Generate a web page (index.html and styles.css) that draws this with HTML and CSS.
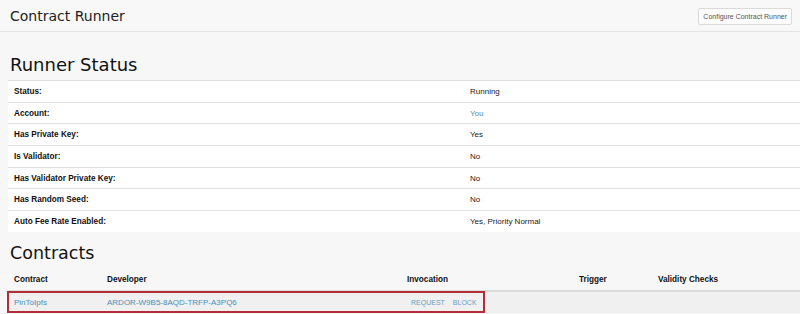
FILE: index.html
```html
<!DOCTYPE html>
<html lang="en">
<head>
    <meta charset="UTF-8">
    <meta name="viewport" content="width=device-width, initial-scale=1.0">
    <title>Contract Runner</title>
    <link rel="stylesheet" href="styles.css">
</head>
<body>
    <div class="page-header">
        <h1>Contract Runner</h1>
        <button class="btn">Configure Contract Runner</button>
    </div>

    <div class="content">
        <h2>Runner Status</h2>
        <table class="status-table">
            <tr><td class="label">Status:</td><td>Running</td></tr>
            <tr><td class="label">Account:</td><td><a href="#">You</a></td></tr>
            <tr><td class="label">Has Private Key:</td><td>Yes</td></tr>
            <tr><td class="label">Is Validator:</td><td>No</td></tr>
            <tr><td class="label">Has Validator Private Key:</td><td>No</td></tr>
            <tr><td class="label">Has Random Seed:</td><td>No</td></tr>
            <tr><td class="label">Auto Fee Rate Enabled:</td><td>Yes, Priority Normal</td></tr>
        </table>

        <h2 class="contracts-title">Contracts</h2>
        <div class="contracts-wrap">
            <table class="contracts-table">
                <thead>
                    <tr>
                        <th class="col-contract">Contract</th>
                        <th class="col-developer">Developer</th>
                        <th class="col-invocation">Invocation</th>
                        <th class="col-trigger">Trigger</th>
                        <th>Validity Checks</th>
                    </tr>
                </thead>
                <tbody>
                    <tr>
                        <td><a href="#">PinToIpfs</a></td>
                        <td><a href="#">ARDOR-W9B5-8AQD-TRFP-A3PQ6</a></td>
                        <td><a href="#" class="action">REQUEST</a><a href="#" class="action">BLOCK</a></td>
                        <td></td>
                        <td></td>
                    </tr>
                </tbody>
            </table>
            <div class="highlight"></div>
        </div>
    </div>
</body>
</html>
```

FILE: styles.css
```css
body {
    margin: 0;
    padding: 0;
    background: #f7f7f7;
    font-family: "Liberation Sans", Arial, sans-serif;
    color: #222;
}
a {
    color: #4a8db8;
    text-decoration: none;
}
.page-header {
    height: 31px;
    display: flex;
    align-items: center;
    justify-content: space-between;
    padding: 0 8px 0 10px;
    border-bottom: 1px solid #e4e4e4;
    background: #f8f8f8;
}
.page-header h1 {
    margin: 0;
    font-family: "DejaVu Sans", sans-serif;
    font-size: 14px;
    font-weight: normal;
    color: #222;
}
.btn {
    height: 17px;
    padding: 0 4px;
    margin-top: 1px;
    font-family: "Liberation Sans", Arial, sans-serif;
    font-size: 7px;
    color: #555;
    background: #fcfcfc;
    border: 1px solid #dadada;
    border-radius: 2px;
}
.content {
    padding-left: 8px;
}
.content h2 {
    margin: 22px 0 5px 2px;
    font-family: "DejaVu Sans", sans-serif;
    font-size: 18px;
    font-weight: normal;
    color: #111;
}
.status-table {
    width: 100%;
    border-collapse: collapse;
    background: #fff;
    font-size: 8px;
}
.status-table td {
    height: 21.7px;
    box-sizing: border-box;
    padding: 0 6px;
    border-top: 1px solid #e2e2e2;
    vertical-align: middle;
}
.status-table td.label {
    width: 456px;
    box-sizing: border-box;
    font-size: 8.2px;
    font-weight: bold;
    color: #111;
}
.content h2.contracts-title {
    margin: 11px 0 6px 2px;
    font-size: 17.5px;
}
.contracts-wrap {
    position: relative;
}
.contracts-table {
    width: 100%;
    border-collapse: collapse;
    font-size: 8px;
}
.contracts-table th {
    height: 22px;
    box-sizing: border-box;
    padding: 0 6px;
    text-align: left;
    font-size: 8.2px;
    font-weight: bold;
    color: #111;
    border-bottom: 2px solid #dcdcdc;
}
.contracts-table td {
    height: 22px;
    box-sizing: border-box;
    padding: 0 6px;
    background: #f0f0f0;
}
.col-contract {
    width: 93px;
}
.col-developer {
    width: 300px;
}
.col-invocation {
    width: 172px;
}
.col-trigger {
    width: 79px;
}
.action {
    font-size: 7px;
    color: #6a9cc2;
    margin: 0 8px 0 4px;
}
.action + .action {
    margin-left: 0;
}
.highlight {
    position: absolute;
    left: -1px;
    top: 22px;
    width: 474px;
    height: 18px;
    border: 2px solid #b32d38;
}
```
